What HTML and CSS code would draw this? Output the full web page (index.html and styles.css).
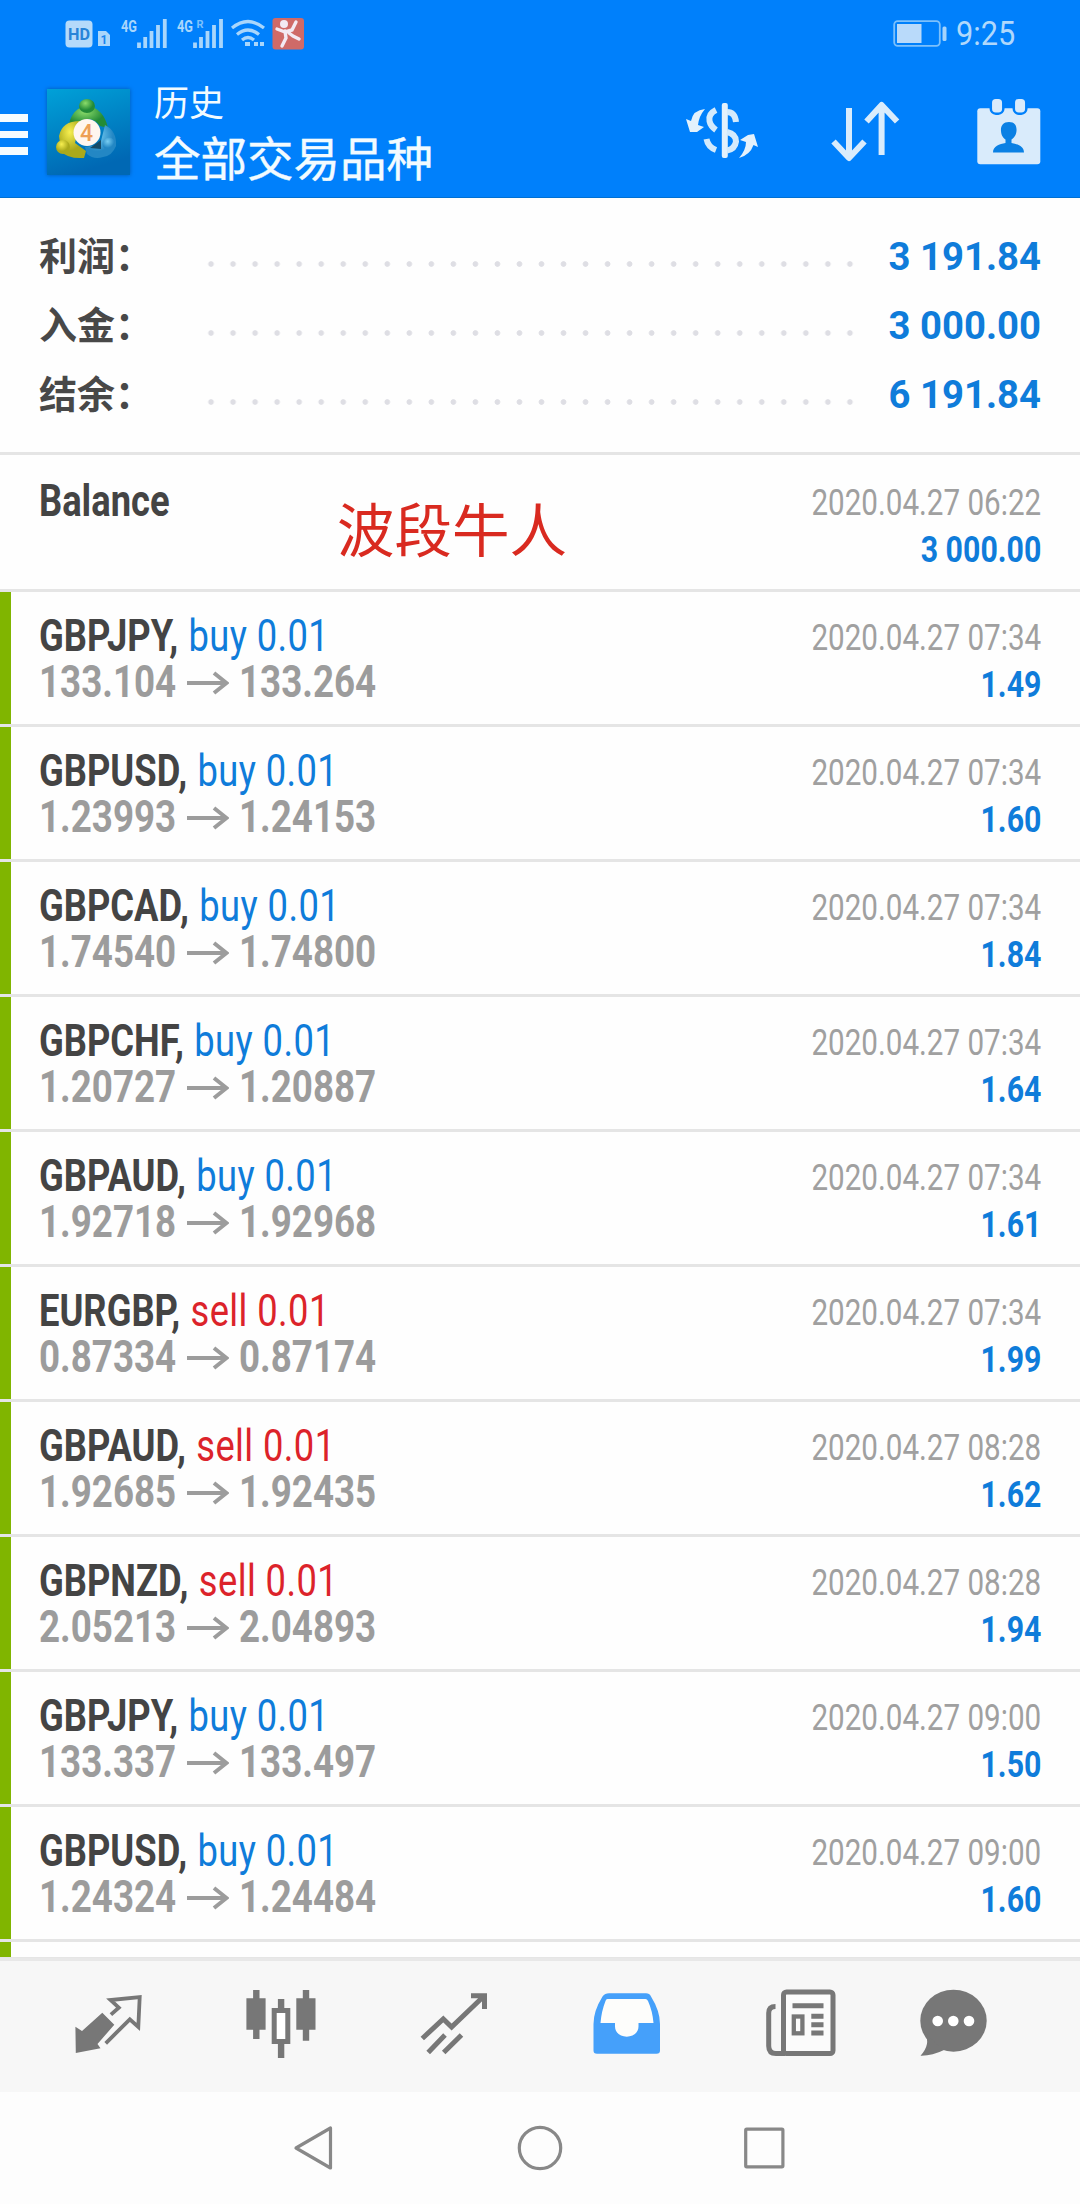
FILE: index.html
```html
<!DOCTYPE html>
<html lang="zh-CN">
<head>
<meta charset="utf-8">
<title>历史</title>
<link rel="stylesheet" href="styles.css">
</head>
<body>
<header class="top">
  <div class="status">
    <svg class="status-icons" width="250" height="36" viewBox="60 16 250 36">
      <rect x="65.5" y="20.5" width="27" height="27" rx="4" fill="#b5dafa"/>
      <text x="79" y="40" class="hd" text-anchor="middle" textLength="22" lengthAdjust="spacingAndGlyphs">HD</text>
      <path d="M98 31h8l4 4v11H98z" fill="#a9d6fb"/>
      <text x="104" y="44" class="sim" text-anchor="middle">1</text>
      <text x="121" y="31.500" class="net" textLength="16" lengthAdjust="spacingAndGlyphs">4G</text>
      <path d="M139 42.500v5.500M145.200 37v11M151.500 31v17M158 25v23M164.800 19v29" stroke="#a9d6fb" stroke-width="3.800"/>
      <text x="177" y="31.500" class="net" textLength="16" lengthAdjust="spacingAndGlyphs">4G</text>
      <text x="196.500" y="27.500" class="roam">R</text>
      <path d="M195 42.500v5.500M201 37v11M207.500 31v17M214 25v23M221 19v29" stroke="#a9d6fb" stroke-width="3.800"/>
      <g fill="none" stroke="#a9d6fb" stroke-width="3.200">
        <path d="M232 28q16-13 32 0M237 34.500q11-9 22 0M242 40q6-5 12 0"/>
      </g>
      <path d="M245 42h5v4h-5zM254 42h4v4h-4zM260 42h4v4h-4z" fill="#a9d6fb"/>
      <rect x="272.500" y="18" width="31.500" height="31.500" rx="3" fill="#cf6a68"/>
      <circle cx="284" cy="24" r="4" fill="#f3eaf3"/>
      <path d="M277 29l8 3 7-2 4-8M285 31l1 7-4 8M289 33l4 3 6 3" fill="none" stroke="#f3eaf3" stroke-width="3.400" stroke-linecap="round"/>
    </svg>
    <div class="clock">
      <svg width="56" height="28" viewBox="0 0 56 28">
        <rect x="1.200" y="1.200" width="45.600" height="24.600" rx="3.500" fill="none" stroke="#7cc0fb" stroke-width="1.800"/>
        <rect x="4" y="4" width="24.500" height="19" fill="#b9dafa"/>
        <rect x="49.500" y="6.500" width="4" height="14.500" rx="1.500" fill="#a5d4fb"/>
      </svg>
      <span>9:25</span>
    </div>
  </div>
  <div class="bar">
    <div class="burger"><i></i><i></i><i></i></div>
    <svg class="logo" width="83" height="86" viewBox="0 0 83 86">
      <defs>
        <linearGradient id="sky" x1="0" y1="0" x2=".3" y2="1"><stop offset="0" stop-color="#00a1d8"/><stop offset="1" stop-color="#0068b4"/></linearGradient>
        <radialGradient id="green" cx=".4" cy=".3"><stop offset="0" stop-color="#8bdc6a"/><stop offset="1" stop-color="#238b37"/></radialGradient>
        <radialGradient id="yellow" cx=".4" cy=".3"><stop offset="0" stop-color="#f7ef50"/><stop offset="1" stop-color="#aaa91b"/></radialGradient>
        <radialGradient id="blue" cx=".4" cy=".3"><stop offset="0" stop-color="#78cdf2"/><stop offset="1" stop-color="#2387c4"/></radialGradient>
      </defs>
      <rect width="83" height="86" fill="url(#sky)"/>
      <path d="M22 35Q25 20 40 16Q57 20 61 39L53 37Q46 28 39 31L30 34Z" fill="url(#green)"/>
      <ellipse cx="40" cy="17" rx="8" ry="7" fill="url(#green)"/>
      <path d="M58 36Q70 42 69 57Q65 67 56 68Q47 71 40 65L38 58L53 56Z" fill="url(#blue)"/>
      <circle cx="62" cy="55" r="6.500" fill="url(#blue)"/>
      <path d="M33 32Q15 32 12 47L14 62Q20 70 37 69L39 62L28 54Z" fill="url(#yellow)"/>
      <circle cx="16" cy="58" r="7" fill="url(#yellow)"/>
      <path d="M43 59l11-8v9z" fill="#174a66"/>
      <circle cx="40" cy="43.500" r="13.500" fill="#fff6ef"/>
      <text x="39.500" y="52" text-anchor="middle" class="four">4</text>
    </svg>
    <div class="heading"><div class="small">历史</div><h1>全部交易品种</h1></div>
    <div class="actions">
      <svg width="80" height="80" viewBox="0 0 80 80">
        <rect x="39.800" y="12" width="6" height="55" rx="2" fill="#e3f1fc"/>
        <g fill="none" stroke="#d3eafc" stroke-width="6">
          <path d="M34 19Q26 23 27.500 30Q28.500 35 34 39M24.500 48Q26 56 34 59M45 21Q53 21 54 31M45 41Q54 43 54 50.500Q53 58 45 59.500"/>
        </g>
        <path d="M23 18Q11 19 9 30L4 28L8 41L15 41L22 36L16 34Q17 25 23 18ZM57 67Q68 64 71.500 54L76 56L72 43L66 44L58 49L64 51Q64 59 57 67Z" fill="#e3f1fc"/>
      </svg>
      <svg width="80" height="80" viewBox="0 0 80 80" fill="none" stroke="#d9ecfc" stroke-width="6" stroke-linejoin="round">
        <path d="M24 17v50M8.500 50.500L24 67l15.500-16.500M56.600 64V15M41.500 30.500L56.600 14l15.500 16.500"/>
      </svg>
      <svg width="80" height="80" viewBox="0 0 80 80">
        <rect x="9.300" y="17.300" width="63" height="56" rx="3" fill="#d9ebfb"/>
        <g fill="#d9ebfb" stroke="#0080fb" stroke-width="2.500"><rect x="22.800" y="6.700" width="12.500" height="16" rx="5"/><rect x="45.800" y="6.700" width="12.500" height="16" rx="5"/></g>
        <path d="M41 31c-6 0-8.500 4-8 9 .3 5 2.500 7 4.500 8.500v3.500c-6 1-12.500 3-12.500 9.500h31c0-6.500-6.500-8.500-12.500-9.500v-3.500c2-1.500 4.500-3.500 5-8.500 .4-5-1.500-9-7.500-9z" fill="#0a80e4"/>
      </svg>
    </div>
  </div>
</header>

<main class="content">
  <section class="summary">
    <div class="sum"><span class="label">利润：</span><span class="dots"></span><span class="value">3 191.84</span></div>
    <div class="sum"><span class="label">入金：</span><span class="dots"></span><span class="value">3 000.00</span></div>
    <div class="sum"><span class="label">结余：</span><span class="dots"></span><span class="value">6 191.84</span></div>
  </section>
  <section class="deal balance">
    <div class="left"><div class="title"><b>Balance</b></div></div>
    <div class="right"><div class="date">2020.04.27 06:22</div><div class="profit">3 000.00</div></div>
    <div class="mark">波段牛人</div>
  </section>
  <div id="deals"></div>
  <div class="deal peek"></div>
</main>

<nav class="tabs">
  <div class="tab"><svg width="80" height="80" viewBox="0 0 80 80"><path d="M7.400 42.700L14 47L34.300 28.700L46.300 40.700L29.500 60L32.500 64.300L7.800 69Z" fill="#777"/><path d="M42.900 30.700L50.800 23.700L42.500 16L71.700 13L70.300 43L61.800 35.300L37.700 59.300" fill="none" stroke="#777" stroke-width="3.800"/></svg></div>
  <div class="tab"><svg width="80" height="80" viewBox="0 0 80 80"><path d="M15.300 6v49M65 6v50.700M40.100 15v10M40.100 60v14" stroke="#777" stroke-width="6.400"/><path d="M5.400 14.300h19.200v31.500H5.400zM55.300 14.300h19.200v31.500H55.300z" fill="#777"/><rect x="33.200" y="26.500" width="13.600" height="31" fill="#fff" stroke="#777" stroke-width="5"/></svg></div>
  <div class="tab"><svg width="80" height="80" viewBox="0 0 80 80" fill="none" stroke="#777" stroke-width="5"><path d="M8.300 54.500L29.300 35L37.600 43L70 12M57 11.800H70.500V25M31 51L14.200 68.500M47.500 51L29.700 68.500"/></svg></div>
  <div class="tab"><svg width="80" height="80" viewBox="0 0 80 80"><path d="M22 9.300H59Q62.500 9.300 64 12.500Q73 27 73 40V66.500Q73 69.700 69.500 69.700H10Q6.500 69.700 6.500 66.500V40Q6.500 27 15.500 12.500Q18 9.300 22 9.300Z" fill="#45a0fa"/><path d="M20.500 15H58.500Q60 15 61 17Q65.500 27 66.500 39H51.500V42.500C51.500 56 28 56 28 42.500V39H13.500Q14.500 27 18.500 17Q19 15 20.500 15Z" fill="#fdfdfb"/></svg></div>
  <div class="tab"><svg width="80" height="80" viewBox="0 0 80 80" fill="none" stroke="#777" stroke-width="5"><rect x="23.500" y="8" width="49.500" height="61.500" rx="3" fill="#fbfbfb"/><path d="M15.500 22.500Q8.700 22.500 8.700 29V62Q8.700 69.500 16 69.500H25M32.500 21.700H63.500M51.300 32.300H63.500M51.300 40.700H63.500M51.300 49H63.500"/><rect x="33.800" y="32.500" width="8.600" height="16.800" stroke-width="4.300"/></svg></div>
  <div class="tab last"><svg width="80" height="80" viewBox="0 0 80 80"><ellipse cx="40.500" cy="36.700" rx="33.200" ry="31" fill="#777"/><path d="M12 50Q18 60 7.500 71.700Q19 72 31 66Z" fill="#777"/><g fill="#fff"><circle cx="24.700" cy="37" r="5.300"/><circle cx="40.300" cy="37" r="5.300"/><circle cx="56" cy="37" r="5.300"/></g></svg></div>
</nav>
<footer class="sysnav">
  <svg width="50" height="50" viewBox="0 0 50 50"><path d="M6 25L40.500 5V45Z"/></svg>
  <svg width="50" height="50" viewBox="0 0 50 50"><circle cx="25" cy="25" r="20.700"/></svg>
  <svg width="50" height="50" viewBox="0 0 50 50"><rect x="5.700" y="6.200" width="37.200" height="37.600" rx="1"/></svg>
</footer>
<script src="deals.js"></script>
</body>
</html>
```
FILE: deals.js
```js
const deals = [
  ["GBPJPY", "buy", "133.104", "133.264", "07:34", "1.49"],
  ["GBPUSD", "buy", "1.23993", "1.24153", "07:34", "1.60"],
  ["GBPCAD", "buy", "1.74540", "1.74800", "07:34", "1.84"],
  ["GBPCHF", "buy", "1.20727", "1.20887", "07:34", "1.64"],
  ["GBPAUD", "buy", "1.92718", "1.92968", "07:34", "1.61"],
  ["EURGBP", "sell", "0.87334", "0.87174", "07:34", "1.99"],
  ["GBPAUD", "sell", "1.92685", "1.92435", "08:28", "1.62"],
  ["GBPNZD", "sell", "2.05213", "2.04893", "08:28", "1.94"],
  ["GBPJPY", "buy", "133.337", "133.497", "09:00", "1.50"],
  ["GBPUSD", "buy", "1.24324", "1.24484", "09:00", "1.60"]
];
const arrow = '<svg class="arrow" width="42" height="24" viewBox="0 0 42 24"><path d="M0 12H39M27 2L39.500 12L27 22" fill="none" stroke="#9c9c9c" stroke-width="4"/></svg>';
document.getElementById("deals").innerHTML = deals.map(([symbol, side, open, close, time, profit]) => `
  <section class="deal">
    <div class="left">
      <div class="title"><b>${symbol},</b> <span class="${side}">${side} 0.01</span></div>
      <div class="prices"><span class="price">${open}</span>${arrow}<span class="price">${close}</span></div>
    </div>
    <div class="right"><div class="date">2020.04.27 ${time}</div><div class="profit">${profit}</div></div>
  </section>`).join("");
```
FILE: styles.css
```css
* { box-sizing: border-box; }
body { margin: 0; width: 1080px; height: 2204px; overflow: hidden; display: flex; flex-direction: column; background: #fefefe; font-family: Roboto, "Noto Sans CJK SC", sans-serif; }
svg { display: block; flex: none; }

.top { height: 198px; flex: none; background: #0080fb; border-bottom: 1px solid #0070d2; }
.status { height: 68px; display: flex; justify-content: space-between; align-items: flex-start; padding: 16px 65px 0 60px; }
.clock { display: flex; align-items: center; gap: 7px; padding-top: 5px; height: 30px; color: #b0d8fb; font-size: 33px; line-height: 28px; }
.clock span { display: block; width: 59px; white-space: nowrap; transform: scaleX(.93); transform-origin: left; }
.hd { font: bold 17px Roboto, sans-serif; fill: #2784d8; }
.sim { font: bold 12px Roboto, sans-serif; fill: #1a85ee; }
.net { font: bold 16px Roboto, sans-serif; fill: #a9d6fb; }
.roam { font: bold 11px Roboto, sans-serif; fill: #7cc0fb; }
.four { font: 500 23px Roboto, sans-serif; fill: #eda057; }

.bar { height: 129px; display: flex; align-items: flex-start; padding-right: 32px; }
.burger { width: 28px; display: grid; gap: 9px; padding-top: 46px; margin-right: 19px; }
.burger i { height: 7.500px; background: #f5fcff; }
.logo { margin-top: 21px; box-shadow: 0 0 4px #0058ae; }
.heading { margin-left: 24px; padding-top: 12px; color: #f2fbff; flex: 1; }
.small { font-size: 35px; line-height: 50px; }
h1 { margin: 0; font-size: 46.500px; font-weight: 400; line-height: 60px; -webkit-text-stroke: .4px #f2fbff; }
.actions { display: flex; gap: 63px; padding-top: 23px; }

.content { height: 1760px; flex: none; overflow: hidden; }
.summary { height: 257px; padding: 24px 39px 0 39px; border-bottom: 3px solid #e5e5e5; }
.sum { height: 69px; display: flex; align-items: center; }
.label { width: 161px; font-size: 38px; font-weight: 700; line-height: 60px; color: #484848; }
.dots { width: 662px; height: 6px; margin-top: 14px; background: radial-gradient(circle, #dedee4 2.400px, transparent 3.200px) 0 0 / 22.040px 6px; }
.value { flex: 1; text-align: right; font-size: 38.300px; font-weight: 700; color: #0f7cda; white-space: nowrap; }

.deal { position: relative; height: 135px; display: flex; justify-content: space-between; padding: 20px 39px 0 28px; border-left: 11px solid #80b500; white-space: nowrap; }
.deal::after { content: ""; position: absolute; left: -11px; right: 0; bottom: 0; height: 3px; background: #e5e5e5; }
.balance { height: 137px; padding-top: 22px; border-left-color: transparent; }
.peek { height: 18px; padding: 0; }
.left, .right { display: flex; flex-direction: column; }
.right { align-items: flex-end; }
.title { font-size: 43.500px; line-height: 49px; color: #444; transform: scaleX(.835); transform-origin: left; }
.prices { display: flex; align-items: center; height: 43px; color: #9c9c9c; font-size: 43.500px; font-weight: 700; }
.price { width: 136px; transform: scaleX(.845); transform-origin: left; }
.arrow { margin: 0 10px 0 12px; }
.date { font-size: 37px; line-height: 51px; color: #a0a0a0; transform: scaleX(.8); transform-origin: right; }
.profit { font-size: 36.500px; line-height: 43px; font-weight: 700; color: #0f7cda; transform: scaleX(.83); transform-origin: right; }
.buy, .sell { margin-left: 1.500px; letter-spacing: .5px; }
.buy { color: #0f7cda; }
.sell { color: #dc232a; }
.mark { position: absolute; left: 326px; top: 30px; font-family: "Noto Sans CJK SC", sans-serif; font-size: 57.500px; line-height: 84px; color: #d92a20; }

.tabs { height: 134px; flex: none; display: flex; padding-left: 21px; background: #f7f7f7; border-top: 3px solid #e8e8e8; }
.tab { width: 173px; display: flex; justify-content: center; padding-top: 23px; }
.tab.last { width: 133px; }
.sysnav { flex: 1; display: flex; justify-content: center; gap: 175px; padding-top: 31px; background: #fdfdfd; }
.sysnav svg { fill: none; stroke: #888; stroke-width: 3.200; stroke-linejoin: round; }
```
